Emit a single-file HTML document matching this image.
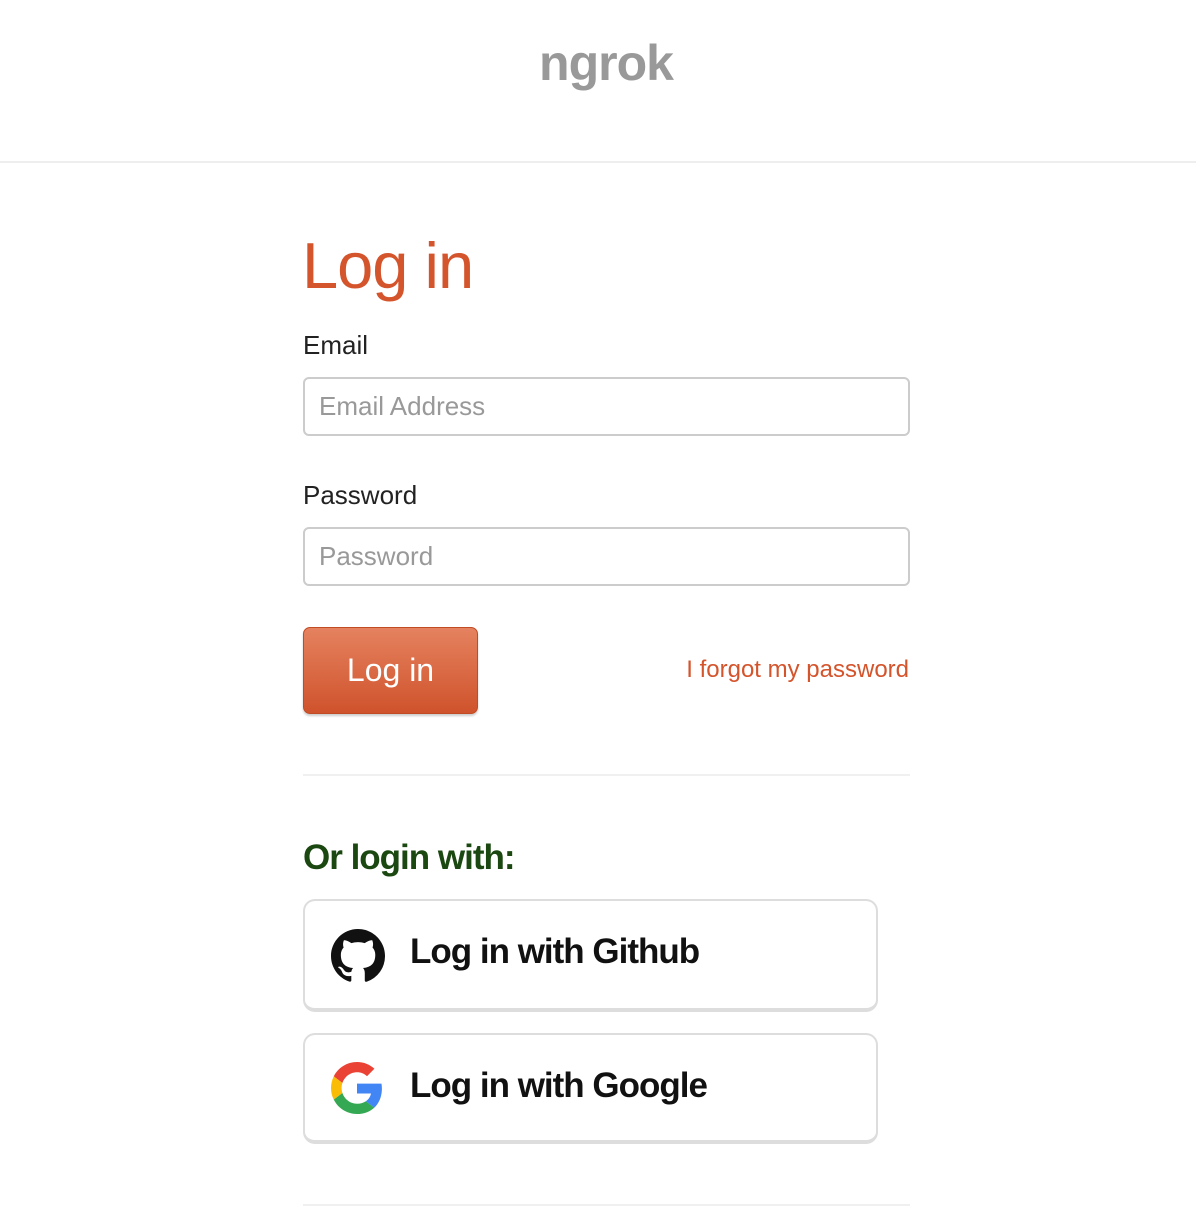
<!DOCTYPE html>
<html><head><style>
*{box-sizing:border-box;margin:0;padding:0}
body{width:1196px;height:1222px;background:#fff;font-family:"Liberation Sans",sans-serif;position:relative;overflow:hidden}
.hdr{height:163px;border-bottom:2px solid #eee;text-align:center}
.logo{position:absolute;top:34px;left:8px;width:1196px;text-align:center;font-size:50px;font-weight:bold;color:#999;letter-spacing:-1px}
h1{position:absolute;left:302px;top:228px;font-size:65px;font-weight:normal;color:#d4542c;letter-spacing:-1px}
.lbl{position:absolute;left:303px;font-size:26px;color:#222}
.inp{position:absolute;left:303px;width:607px;height:59px;border:2px solid #ccc;border-radius:6px;font-size:26px;color:#999;padding:12px 14px}
.btn{position:absolute;left:303px;top:627px;width:175px;height:87px;border-radius:7px;background:linear-gradient(#e5825f,#cf532c);border:1px solid #c04b25;box-shadow:0 2px 2px rgba(0,0,0,.2);color:#fff;font-size:32px;text-align:center;line-height:84px}
.fg{position:absolute;right:287px;top:656px;font-size:24px;color:#d4542c}
.hr{position:absolute;left:303px;width:607px;height:2px;background:#f0f0f0}
.or{position:absolute;left:303px;top:838px;font-size:35px;font-weight:bold;color:#1b4711;letter-spacing:-1px}
.sb{position:absolute;left:303px;width:575px;border:2px solid #ddd;border-bottom-width:4px;border-radius:12px}
.sb span{position:absolute;left:105px;font-size:35px;font-weight:bold;color:#111;letter-spacing:-1px}
.sb svg{position:absolute;left:26px}
</style></head><body>
<div class="hdr"></div>
<div class="logo">ngrok</div>
<h1>Log in</h1>
<div class="lbl" style="top:330px">Email</div>
<div class="inp" style="top:377px">Email Address</div>
<div class="lbl" style="top:480px">Password</div>
<div class="inp" style="top:527px">Password</div>
<div class="btn">Log in</div>
<div class="fg">I forgot my password</div>
<div class="hr" style="top:774px"></div>
<div class="or">Or login with:</div>
<div class="sb" style="top:899px;height:113px">
<svg width="54" height="54" viewBox="0 0 16 16" style="top:28px"><path fill="#111" d="M8 0C3.58 0 0 3.58 0 8c0 3.540 2.29 6.53 5.47 7.59.4.07.55-.17.55-.38v-1.33c-2.230.48-2.7-1.07-2.7-1.07-.36-.92-.89-1.17-.89-1.17-.73-.5.06-.49.06-.49.8.06 1.23.83 1.23.83.71 1.22 1.87.87 2.33.66.07-.52.28-.87.51-1.070-1.78-.2-3.64-.89-3.64-3.95 0-.87.31-1.59.82-2.15-.08-.2-.36-1.02.08-2.12 0 0 .67-.21 2.2.82a7.6 7.6 0 0 1 4 0c1.53-1.04 2.2-.82 2.2-.82.44 1.1.16 1.92.08 2.12.51.56.82 1.27.82 2.15 0 3.07-1.87 3.75-3.65 3.95.29.25.54.73.54 1.48v2.2c0 .21.15.46.55.38A8 8 0 0 0 16 8c0-4.42-3.58-8-8-8z"/></svg>
<span style="top:31px">Log in with Github</span></div>
<div class="sb" style="top:1033px;height:111px">
<svg width="52" height="52" viewBox="0 0 48 48" style="top:27px"><path fill="#EA4335" d="M24 9.5c3.54 0 6.71 1.22 9.21 3.6l6.85-6.85C35.9 2.38 30.470 0 24 0 14.62 0 6.51 5.38 2.56 13.22l7.98 6.19C12.43 13.72 17.74 9.5 24 9.5z"/><path fill="#4285F4" d="M46.98 24.55c0-1.57-.15-3.090-.38-4.55H24v9.02h12.94c-.58 2.96-2.26 5.48-4.78 7.18l7.73 6c4.51-4.18 7.09-10.36 7.09-17.65z"/><path fill="#FBBC05" d="M10.53 28.59c-.48-1.45-.76-2.99-.76-4.59s.27-3.14.76-4.59l-7.98-6.19C.92 16.46 0 20.12 0 24c0 3.88.92 7.54 2.56 10.78l7.97-6.19z"/><path fill="#34A853" d="M24 48c6.48 0 11.93-2.13 15.89-5.81l-7.73-6c-2.15 1.45-4.92 2.3-8.16 2.3-6.26 0-11.57-4.22-13.47-9.91l-7.98 6.19C6.51 42.62 14.62 48 24 48z"/></svg>
<span style="top:31px">Log in with Google</span></div>
<div class="hr" style="top:1204px"></div>
</body></html>
